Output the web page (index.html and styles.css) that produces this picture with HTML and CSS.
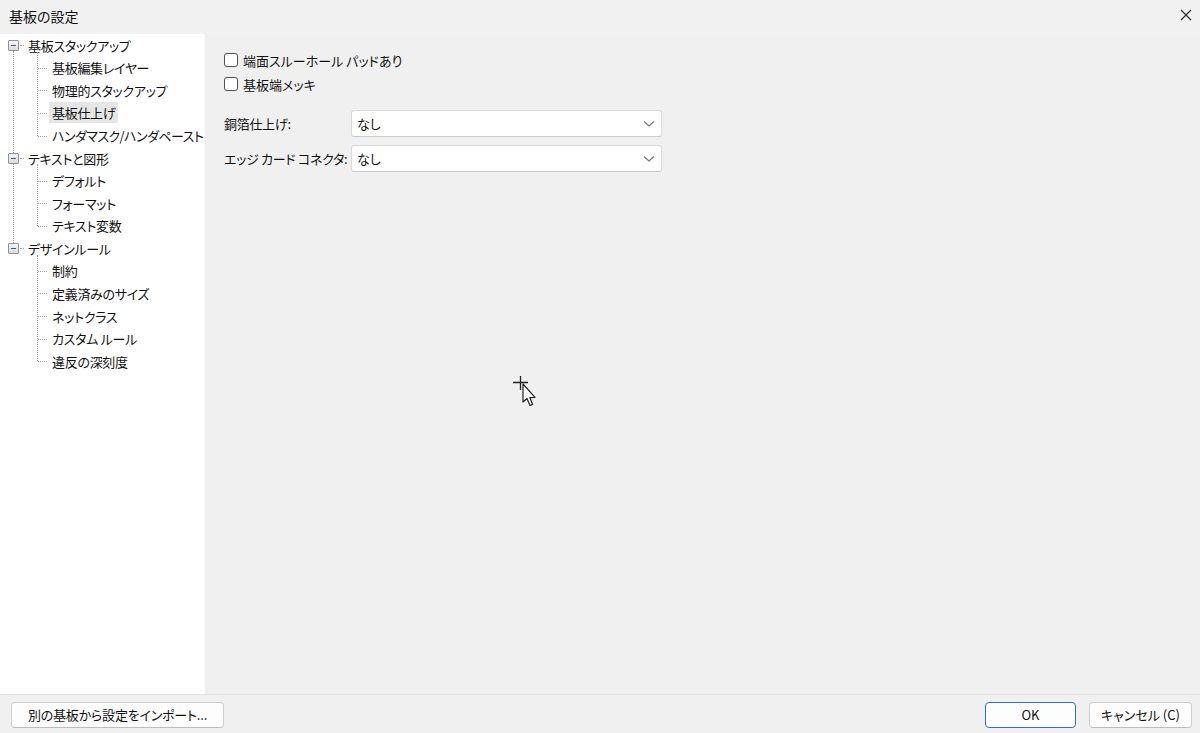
FILE: index.html
```html
<!DOCTYPE html>
<html lang="ja">
<head>
<meta charset="utf-8">
<link rel="stylesheet" href="styles.css">
</head>
<body>
<div class="window">
  <div class="titlebar">
    <span class="title">基板の設定</span>
    <svg class="close" width="12" height="12" viewBox="0 0 12 12"><path d="M1 1L11 11M11 1L1 11" stroke="#333" stroke-width="1.3" fill="none"/></svg>
  </div>
  <div class="main">
    <div class="tree">
      <div class="group">
        <div class="node top"><span class="exp"></span><span class="lbl">基板スタックアップ</span></div>
        <div class="children">
          <div class="node child"><span class="lbl">基板編集レイヤー</span></div>
          <div class="node child"><span class="lbl">物理的スタックアップ</span></div>
          <div class="node child"><span class="lbl sel">基板仕上げ</span></div>
          <div class="node child"><span class="lbl tight">ハンダマスク/ハンダペースト</span></div>
        </div>
      </div>
      <div class="group">
        <div class="node top"><span class="exp"></span><span class="lbl">テキストと図形</span></div>
        <div class="children">
          <div class="node child"><span class="lbl">デフォルト</span></div>
          <div class="node child"><span class="lbl">フォーマット</span></div>
          <div class="node child"><span class="lbl">テキスト変数</span></div>
        </div>
      </div>
      <div class="group last">
        <div class="node top"><span class="exp"></span><span class="lbl">デザインルール</span></div>
        <div class="children">
          <div class="node child"><span class="lbl">制約</span></div>
          <div class="node child"><span class="lbl">定義済みのサイズ</span></div>
          <div class="node child"><span class="lbl">ネットクラス</span></div>
          <div class="node child"><span class="lbl">カスタム ルール</span></div>
          <div class="node child"><span class="lbl">違反の深刻度</span></div>
        </div>
      </div>
    </div>
    <div class="content">
      <label class="check"><span class="box"></span>端面スルーホール パッドあり</label>
      <label class="check"><span class="box"></span>基板端メッキ</label>
      <div class="fields">
        <div class="field">
          <span class="flabel">銅箔仕上げ:</span>
          <div class="combo"><span>なし</span><svg width="12" height="8" viewBox="0 0 12 8"><path d="M1 1.5L6 6L11 1.5" stroke="#777" stroke-width="1.2" fill="none"/></svg></div>
        </div>
        <div class="field">
          <span class="flabel">エッジ カード コネクタ:</span>
          <div class="combo"><span>なし</span><svg width="12" height="8" viewBox="0 0 12 8"><path d="M1 1.5L6 6L11 1.5" stroke="#777" stroke-width="1.2" fill="none"/></svg></div>
        </div>
      </div>
      <svg class="cursor" width="30" height="34" viewBox="0 0 30 34">
        <path d="M0 6.5H15M7.5 0V14" stroke="#222" stroke-width="1.3" fill="none"/>
        <path d="M10 8V26L14 22.5L17 29.5L19.6 28.4L16.8 21.6L22 21.4Z" fill="#fff" stroke="#222" stroke-width="1.2" stroke-linejoin="round"/>
      </svg>
    </div>
  </div>
  <div class="footer">
    <button class="btn import">別の基板から設定をインポート...</button>
    <div class="right">
      <button class="btn ok">OK</button>
      <button class="btn cancel">キャンセル (C)</button>
    </div>
  </div>
</div>
</body>
</html>
```

FILE: styles.css
```css
* { box-sizing: border-box; }
html, body { margin: 0; padding: 0; }
body {
  width: 1200px;
  height: 733px;
  overflow: hidden;
  background: #f0f0f0;
  font-family: "Noto Sans CJK JP", "Noto Sans", sans-serif;
  font-size: 13px;
  color: #111;
  font-feature-settings: "palt";
}
.window { display: flex; flex-direction: column; height: 733px; }
.titlebar {
  height: 34px;
  flex: none;
  display: flex;
  align-items: center;
  justify-content: space-between;
  padding: 0 8px 0 9px;
  background: #f1f1f1;
}
.title { font-size: 14px; color: #111; margin-top: -2px; }
.close { margin-top: -4px; }
.main { flex: 1; display: flex; min-height: 0; }
.tree {
  width: 204px;
  flex: none;
  background: #fff;
  overflow: hidden;
}
.group { position: relative; }
.group::before {
  content: "";
  position: absolute;
  left: 13px;
  top: 17px;
  bottom: -6px;
  border-left: 1px dotted #a0a0a0;
}
.group.last::before { display: none; }
.node {
  height: 22.57px;
  display: flex;
  align-items: center;
  position: relative;
  white-space: nowrap;
  letter-spacing: -0.3px;
}
.top { padding-left: 8px; }
.exp {
  width: 11px;
  height: 11px;
  border: 1px solid #919191;
  background: linear-gradient(#f7f7f7, #dcdcdc);
  position: relative;
  flex: none;
  z-index: 1;
  border-radius: 1px;
}
.exp::after {
  content: "";
  position: absolute;
  left: 2px;
  top: 4px;
  width: 5px;
  height: 1px;
  background: #3a55a0;
}
.top .exp + .lbl { margin-left: 6px; position: relative; }
.top .lbl::before {
  content: "";
  position: absolute;
  left: -5px;
  top: 50%;
  width: 4px;
  border-top: 1px dotted #a0a0a0;
}
.children { position: relative; }
.children::before {
  content: "";
  position: absolute;
  left: 37px;
  top: -5px;
  height: calc(100% - 6px);
  border-left: 1px dotted #a0a0a0;
}
.child { padding-left: 49px; }
.child::before {
  content: "";
  position: absolute;
  left: 38px;
  top: 50%;
  width: 9px;
  border-top: 1px dotted #a0a0a0;
}
.lbl { padding: 0 3px; line-height: 21px; }
.lbl.tight { letter-spacing: -0.55px; }
.lbl.sel { background: #e6e6e6; }
.content { flex: 1; padding: 14px 0 0 19px; position: relative; border-left: 1px solid #fbfbfb; }
.check {
  display: flex;
  align-items: center;
  height: 24px;
  gap: 5px;
  font-size: 13px;
  white-space: nowrap;
}
.box {
  width: 14px;
  height: 14px;
  border: 1px solid #4f4f4f;
  border-radius: 3px;
  background: #fff;
  flex: none;
}
.fields { margin-top: 14px; display: flex; flex-direction: column; gap: 8px; }
.field { display: flex; align-items: center; height: 27px; white-space: nowrap; }
.flabel { width: 127px; flex: none; letter-spacing: -0.3px; }
.combo {
  width: 311px;
  height: 27px;
  background: #fff;
  border: 1px solid #dadada;
  border-bottom-color: #c8c8c8;
  border-radius: 3px;
  display: flex;
  align-items: center;
  justify-content: space-between;
  padding: 0 6px 0 5px;
}
.cursor { position: absolute; left: 308px; top: 342px; }
.footer {
  height: 39px;
  flex: none;
  border-top: 1px solid #e2e2e2;
  display: flex;
  align-items: center;
  justify-content: space-between;
  padding: 0 8px 0 11px;
}
.btn {
  height: 26px;
  font-family: inherit;
  font-size: 13px;
  color: #111;
  background: #fdfdfd;
  border: 1px solid #d0d0d0;
  border-bottom-color: #bdbdbd;
  border-radius: 4px;
  padding: 0 4px;
  margin-top: 1px;
  white-space: nowrap;
  font-feature-settings: "palt";
}
.import { width: 213px; letter-spacing: -0.2px; }
.right { display: flex; gap: 13px; }
.ok { width: 91px; border: 1px solid #2f6dd0; }
.cancel { width: 103px; }
```
